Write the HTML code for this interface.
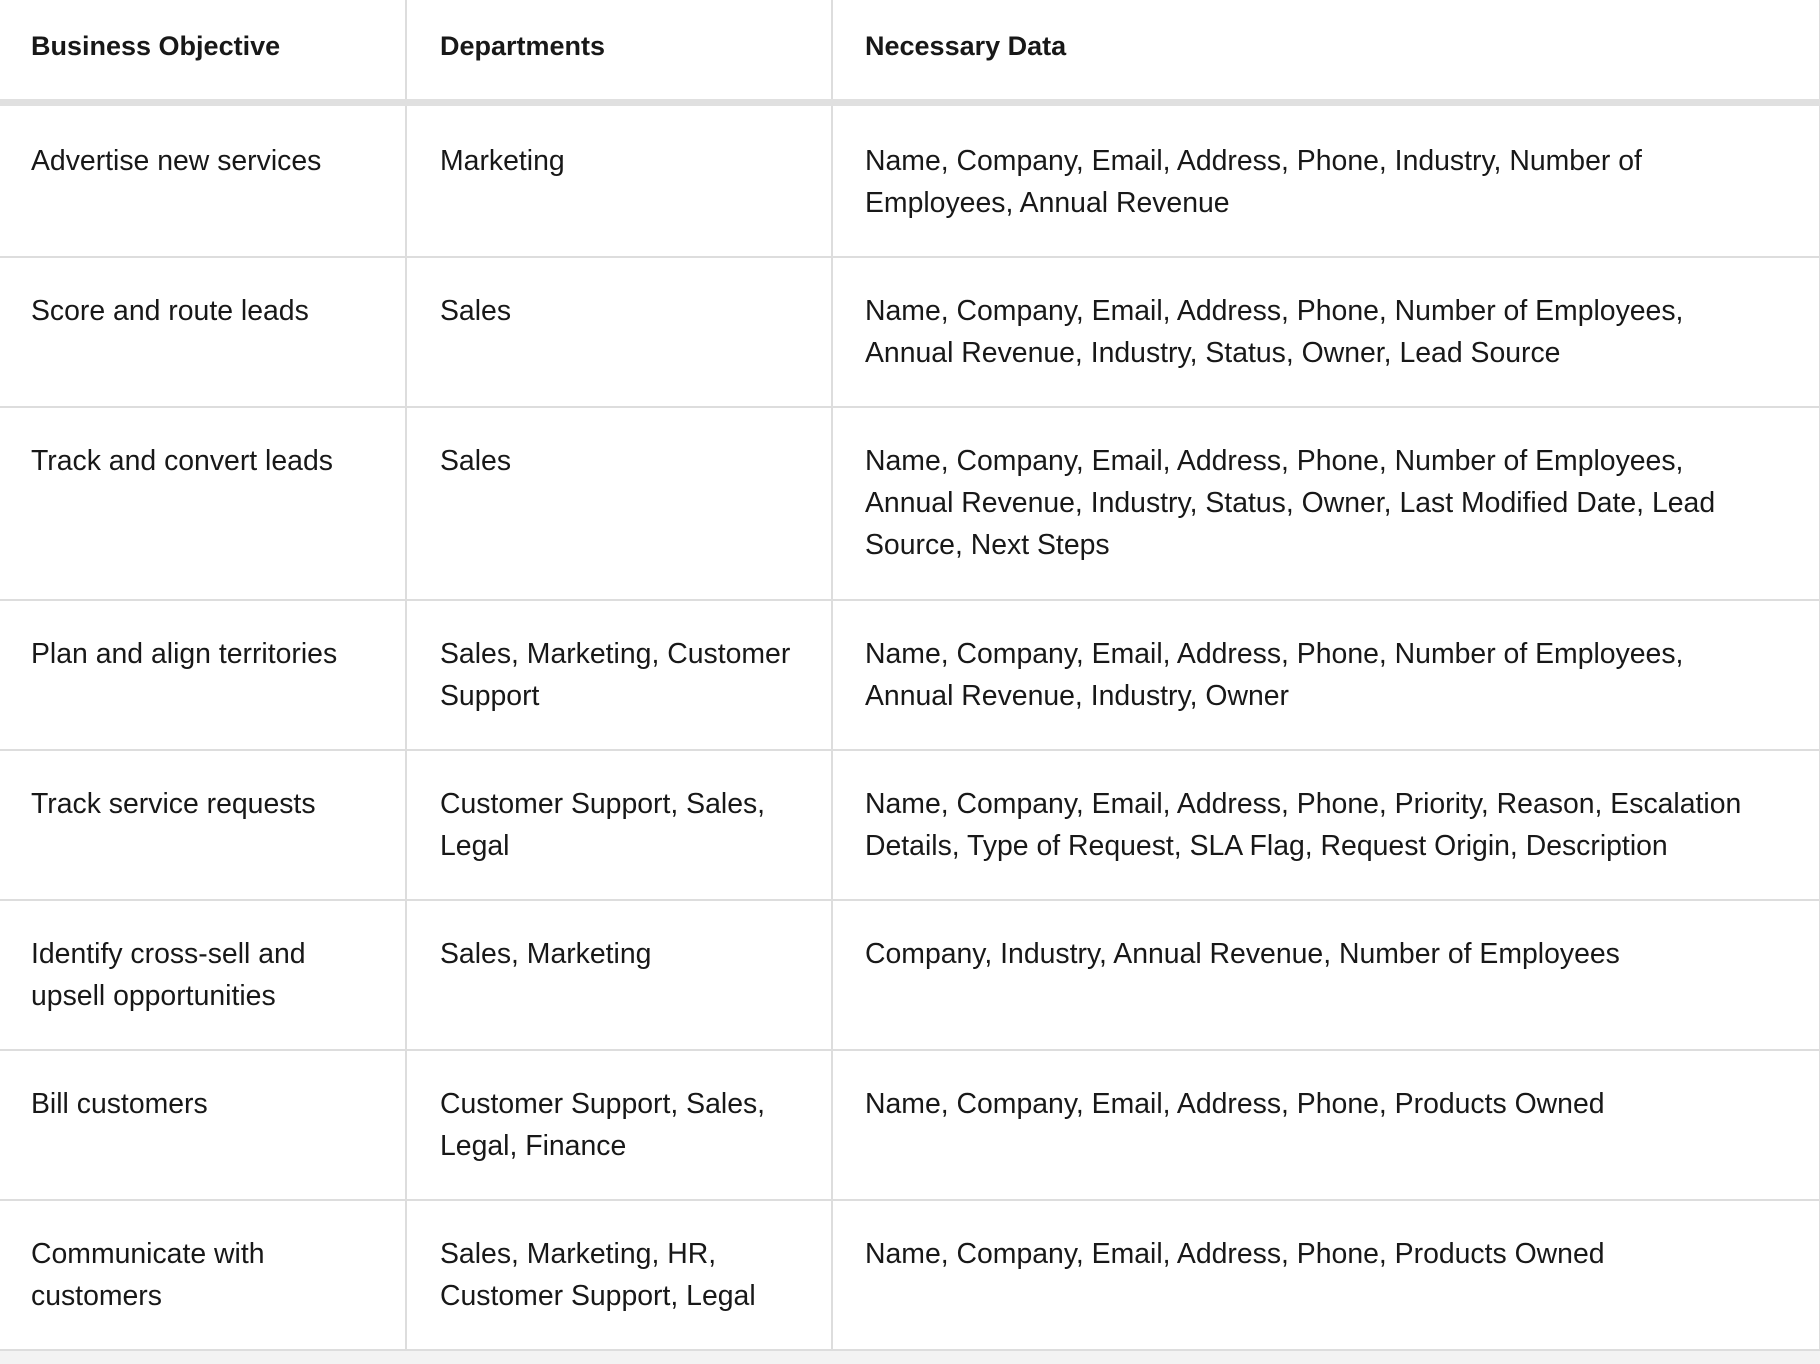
<!DOCTYPE html>
<html><head><style>
html,body{margin:0;padding:0;background:#f3f3f3;width:1820px;height:1364px;overflow:hidden}
table{border-collapse:collapse;background:#fff;font-family:"Liberation Sans",sans-serif;font-size:28.4px;color:#181818;table-layout:fixed;width:1820px}
td,th{border-right:2px solid #dddddd;border-bottom:2px solid #dddddd;padding:32px 20px 0 33px;vertical-align:top;text-align:left;line-height:42px;white-space:nowrap;box-sizing:border-box}
th{font-weight:bold;font-size:27px;height:102px;padding-top:25px;border-bottom:7px solid #e0e0e0}
td{height:150px}
tr.r1 td{height:155px;padding-top:34px}
td:first-child,th:first-child{padding-left:31px}
td:last-child,th:last-child{padding-left:32px}
tr.t3 td{height:193px}
</style></head><body>
<table>
<colgroup><col style="width:406px"><col style="width:426px"><col style="width:988px"></colgroup>
<tr><th>Business Objective</th><th>Departments</th><th>Necessary Data</th></tr>
<tr class="r1"><td>Advertise new services</td><td>Marketing</td><td>Name, Company, Email, Address, Phone, Industry, Number of<br>Employees, Annual Revenue</td></tr>
<tr><td>Score and route leads</td><td>Sales</td><td>Name, Company, Email, Address, Phone, Number of Employees,<br>Annual Revenue, Industry, Status, Owner, Lead Source</td></tr>
<tr class="t3"><td>Track and convert leads</td><td>Sales</td><td>Name, Company, Email, Address, Phone, Number of Employees,<br>Annual Revenue, Industry, Status, Owner, Last Modified Date, Lead<br>Source, Next Steps</td></tr>
<tr><td>Plan and align territories</td><td>Sales, Marketing, Customer<br>Support</td><td>Name, Company, Email, Address, Phone, Number of Employees,<br>Annual Revenue, Industry, Owner</td></tr>
<tr><td>Track service requests</td><td>Customer Support, Sales,<br>Legal</td><td>Name, Company, Email, Address, Phone, Priority, Reason, Escalation<br>Details, Type of Request, SLA Flag, Request Origin, Description</td></tr>
<tr><td>Identify cross-sell and<br>upsell opportunities</td><td>Sales, Marketing</td><td>Company, Industry, Annual Revenue, Number of Employees</td></tr>
<tr><td>Bill customers</td><td>Customer Support, Sales,<br>Legal, Finance</td><td>Name, Company, Email, Address, Phone, Products Owned</td></tr>
<tr><td>Communicate with<br>customers</td><td>Sales, Marketing, HR,<br>Customer Support, Legal</td><td>Name, Company, Email, Address, Phone, Products Owned</td></tr>
</table>
</body></html>
